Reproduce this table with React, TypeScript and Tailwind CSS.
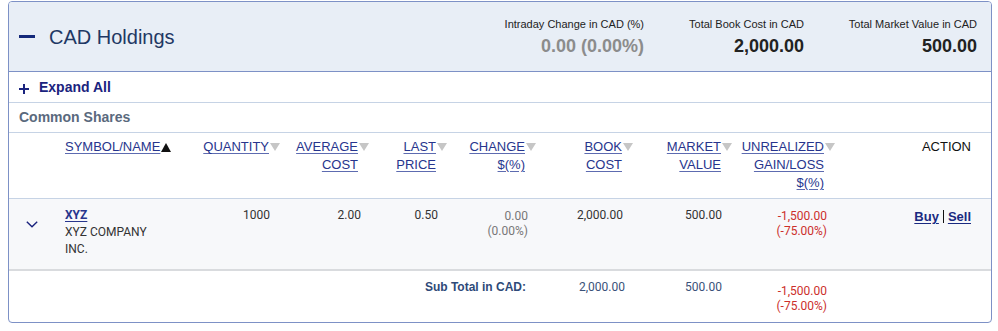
import React from 'react'

// column template shared by the header row, the holding rows and the subtotal
const cols = 'grid grid-cols-[56px_120px_95px_89px_78px_89px_97px_99px_103px_136px] pr-[20px]'

const sans = "font-['Liberation_Sans',Arial,sans-serif]"
const roboto = "font-['Roboto',Arial,sans-serif]"

function SortArrow({ up }: { up?: boolean }) {
  return up ? (
    <svg width="10" height="9" viewBox="0 0 10 9" className="mt-[5px] ml-[1px] shrink-0">
      <polygon points="5,0 10,9 0,9" fill="#111" />
    </svg>
  ) : (
    <svg width="10" height="8" viewBox="0 0 10 8" className="mt-[5px] ml-[1px] shrink-0">
      <polygon points="0,0 10,0 5,8" fill="#c6c6c6" />
    </svg>
  )
}

function HeadCell({ lines, left, up }: { lines: string[]; left?: boolean; up?: boolean }) {
  return (
    <div className={`flex items-start ${left ? 'justify-start' : 'justify-end'}`}>
      <div className={`flex flex-col ${left ? 'items-start' : 'items-end'}`}>
        {lines.map((l) => (
          <a key={l} href="#" className="text-[#27358d] underline underline-offset-2 decoration-[#5d6bb0]">
            {l}
          </a>
        ))}
      </div>
      <SortArrow up={up} />
    </div>
  )
}

function Stat({ label, value, muted, w }: { label: string; value: string; muted?: boolean; w?: string }) {
  return (
    <div className={`flex flex-col items-end ${w ?? ''}`}>
      <div className="text-[11px] leading-[16px] text-[#222]">{label}</div>
      <div className={`mt-[3px] text-[18px] leading-[22px] font-bold ${muted ? 'text-[#8c8c8c]' : 'text-[#222]'}`}>
        {value}
      </div>
    </div>
  )
}

export default function App() {
  const headers = [
    { lines: ['QUANTITY'] },
    { lines: ['AVERAGE', 'COST'] },
    { lines: ['LAST', 'PRICE'] },
    { lines: ['CHANGE', '$(%)'] },
    { lines: ['BOOK', 'COST'] },
    { lines: ['MARKET', 'VALUE'] },
    { lines: ['UNREALIZED', 'GAIN/LOSS', '$(%)'] },
  ]

  return (
    <div className={`${sans} bg-white w-[998px] h-[331px] pt-px`}>
      <div className="ml-2 w-[984px] rounded-[4px] border border-[#7d91c6] overflow-hidden">
        {/* summary header */}
        <div className="h-[70px] flex items-center justify-between bg-[#e8eef6] border-b border-[#7d91c6] pl-[10px] pr-[14px]">
          <div className="flex items-center">
            <div className="w-[16px] h-[3px] bg-[#14287a]" />
            <div className="ml-[14px] text-[20px] text-[#1f3864]">CAD Holdings</div>
          </div>
          <div className="flex items-center">
            <Stat label="Intraday Change in CAD (%)" value="0.00 (0.00%)" muted />
            <Stat label="Total Book Cost in CAD" value="2,000.00" w="w-[160px]" />
            <Stat label="Total Market Value in CAD" value="500.00" w="w-[173px]" />
          </div>
        </div>

        {/* expand all */}
        <div className="h-[31px] flex items-center border-b border-[#c6d3e5] pl-[10px]">
          <svg width="10" height="10" viewBox="0 0 10 10" className="mt-[3px]">
            <rect x="0" y="4" width="10" height="2" fill="#1a237e" />
            <rect x="4" y="0" width="2" height="10" fill="#1a237e" />
          </svg>
          <a href="#" className="ml-[10px] text-[14px] font-bold text-[#1a237e]">Expand All</a>
        </div>

        {/* group title */}
        <div className="h-[30px] flex items-center border-b border-[#c6d3e5] pl-[10px] text-[14px] font-bold text-[#5a697d]">
          Common Shares
        </div>

        {/* column headers */}
        <div className={`${cols} h-[66px] pt-[5px] border-b border-[#c6d3e5] text-[13px] leading-[18px]`}>
          <div />
          <HeadCell lines={['SYMBOL/NAME']} left up />
          {headers.map((h) => (
            <HeadCell key={h.lines.join('-')} lines={h.lines} />
          ))}
          <div className="text-right text-[#111]">ACTION</div>
        </div>

        {/* holding row */}
        <div className={`${cols} h-[72px] bg-[#f7f8fa] border-b-2 border-[#d9dbde] ${roboto} text-[12px] leading-[17px] text-[#333]`}>
          <div className="pl-[17px] pt-[22px]">
            <svg width="12" height="7" viewBox="0 0 12 7">
              <polyline points="0.8,0.8 6,5.8 11.2,0.8" fill="none" stroke="#1a237e" strokeWidth="1.4" />
            </svg>
          </div>
          <div className="pt-[8px]">
            <a href="#" className="font-bold text-[#27358d] underline underline-offset-2">XYZ</a>
            <div className="w-[96px]">XYZ COMPANY INC.</div>
          </div>
          <div className="pt-[8px] pr-[10px] text-right">1000</div>
          <div className="pt-[8px] pr-[8px] text-right">2.00</div>
          <div className="pt-[8px] pr-[9px] text-right">0.50</div>
          <div className="pt-[10px] pr-[8px] text-right leading-[15px] text-[#777]">
            <div>0.00</div>
            <div>(0.00%)</div>
          </div>
          <div className="pt-[8px] pr-[10px] text-right">2,000.00</div>
          <div className="pt-[8px] pr-[10px] text-right">500.00</div>
          <div className="pt-[10px] pr-[8px] text-right leading-[15px] text-[#cc2f2b]">
            <div>-1,500.00</div>
            <div>(-75.00%)</div>
          </div>
          <div className={`${sans} pt-[9px] text-[13px] font-bold flex justify-end items-start`}>
            <a href="#" className="text-[#1a2a80] underline underline-offset-2">Buy</a>
            <span className="mx-[4px] mt-[2px] w-px h-[13px] bg-[#111]" />
            <a href="#" className="text-[#1a2a80] underline underline-offset-2">Sell</a>
          </div>
        </div>

        {/* subtotal */}
        <div className={`${cols} h-[51px] ${roboto} text-[12px] leading-[17px]`}>
          <div className={`col-span-6 ${sans} pt-[8px] pr-[10px] text-right font-bold text-[#2e4a78]`}>
            Sub Total in CAD:
          </div>
          <div className="pt-[8px] pr-[8px] text-right text-[#3a5279]">2,000.00</div>
          <div className="pt-[8px] pr-[10px] text-right text-[#3a5279]">500.00</div>
          <div className="pt-[13px] pr-[8px] text-right leading-[15px] text-[#cc2f2b]">
            <div>-1,500.00</div>
            <div>(-75.00%)</div>
          </div>
          <div />
        </div>
      </div>
    </div>
  )
}
